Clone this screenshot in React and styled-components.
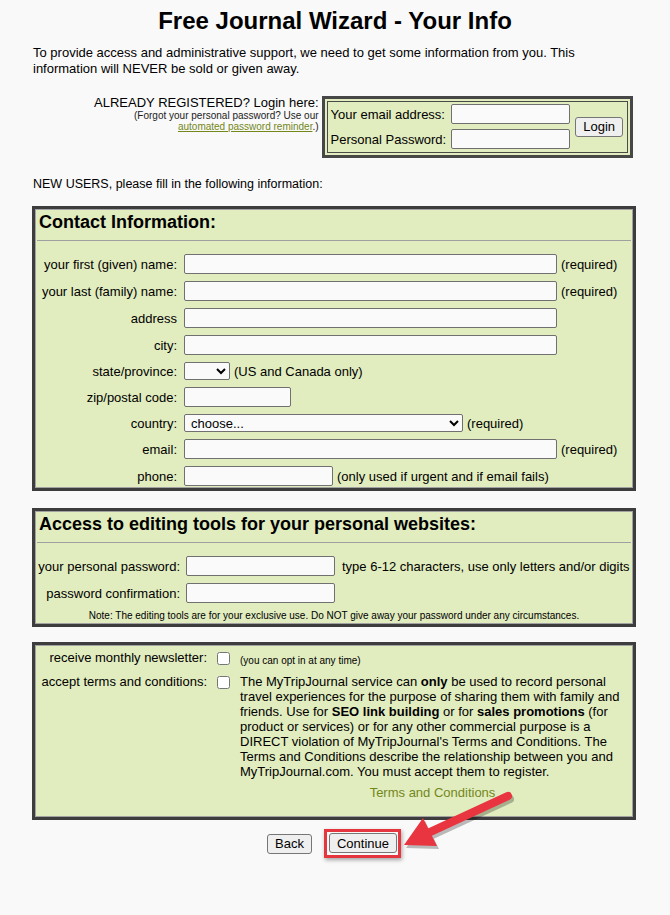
import React from 'react';
import styled, { createGlobalStyle } from 'styled-components';

const GlobalStyle = createGlobalStyle`
  body {
    margin: 0;
    background: #f9f9f9;
    font-family: "Liberation Sans", Arial, sans-serif;
    color: #000;
  }
`;

const Page = styled.div`
  position: relative;
  width: 670px;
  min-height: 915px;
  padding-top: 7px;
  box-sizing: border-box;
`;

const Title = styled.h1`
  margin: 0;
  font-size: 24px;
  line-height: 28px;
  font-weight: bold;
  text-align: center;
`;

const Content = styled.div`
  width: 604px;
  margin-left: 32px;
`;

const Intro = styled.p`
  margin: 10px 0 0 1px;
  font-size: 13px;
  line-height: 16px;
`;

const LoginRow = styled.div`
  display: flex;
  justify-content: flex-end;
  align-items: flex-start;
  margin: 19px 3px 0 0;
`;

const LoginHint = styled.div`
  display: flex;
  flex-direction: column;
  align-items: flex-end;
  text-align: right;
  margin: -1px 3px 0 0;
  font-size: 13px;
  line-height: 15px;
`;

const SmallText = styled.span`
  font-size: 10px;
  line-height: 11px;
  color: #222;
  &:first-of-type {
    margin-top: 1px;
  }
`;

const Link = styled.a`
  color: #74871a;
  text-decoration: ${p => (p.$plain ? 'none' : 'underline')};
  cursor: pointer;
`;

const LoginBox = styled.div`
  border: 3px solid #474747;
  padding: 2px;
  background: #e1ecbf;
`;

const LoginInner = styled.div`
  border: 1px solid #4a4a4a;
  padding: 2px 4px 3px 3px;
  display: grid;
  grid-template-columns: auto 119px auto;
  column-gap: 5px;
  row-gap: 5px;
  align-items: center;
  font-size: 13px;
`;

const LoginButtonCell = styled.div`
  grid-column: 3;
  grid-row: 1 / span 2;
  display: flex;
  align-items: center;
`;

const TextInput = styled.input`
  box-sizing: border-box;
  width: ${p => p.$w}px;
  height: 20px;
  margin: 0;
  padding: 1px 3px;
  border: 1px solid #707070;
  border-radius: 2px;
  background: #fafafa;
  font-family: inherit;
  font-size: 13px;
`;

const Select = styled.select`
  box-sizing: border-box;
  width: ${p => p.$w}px;
  height: 18px;
  margin: 0;
  padding: 0 2px;
  border: 1px solid #707070;
  border-radius: 2px;
  background: #fafafa;
  font-family: inherit;
  font-size: 13px;
  color: #000;
`;

const Button = styled.button`
  height: 20px;
  margin: 0;
  padding: 0 ${p => p.$px || 7}px;
  border: 1px solid #767676;
  border-radius: 3px;
  background: #efefef;
  font-family: inherit;
  font-size: 13px;
  color: #000;
`;

const NewUsers = styled.div`
  margin: 19px 0 0 1px;
  font-size: 12.5px;
  line-height: 15px;
`;

const Panel = styled.section`
  margin-top: ${p => p.$gap}px;
  border: 3px solid #3d3d3d;
  box-shadow: inset 0 0 0 1px #a2a2a2;
  background: #e1ecbf;
  padding: ${p => p.$pad};
`;

const PanelTitle = styled.h2`
  margin: 0;
  padding: 2px 4px 0;
  font-size: 18px;
  line-height: 22px;
  font-weight: bold;
`;

const Rule = styled.div`
  margin: 7px 2px 0;
  border-top: 1px solid #a0a0a0;
`;

const FormGrid = styled.div`
  display: grid;
  grid-template-columns: ${p => p.$label}px 1fr;
  column-gap: ${p => p.$colGap}px;
  row-gap: 7px;
  align-items: center;
  margin-top: 13px;
  padding: 0 3px;
  font-size: 13px;
  line-height: 15px;
`;

const Label = styled.label`
  text-align: right;
  white-space: nowrap;
`;

const Field = styled.div`
  display: flex;
  align-items: center;
  gap: ${p => p.$gap || 4}px;
  white-space: nowrap;
`;

const Note = styled.div`
  margin-top: 7px;
  padding-bottom: 1px;
  font-size: 10px;
  line-height: 12px;
  text-align: center;
`;

const TermsGrid = styled.div`
  display: grid;
  grid-template-columns: 169px 13px 1fr;
  column-gap: 10px;
  row-gap: 9px;
  align-items: start;
  font-size: 13px;
  line-height: 15px;
`;

const CheckBox = styled.input`
  width: 13px;
  height: 13px;
  margin: 2px 0 0;
`;

const OptNote = styled.span`
  align-self: end;
  font-size: 10px;
  line-height: 12px;
  margin-bottom: -2px;
`;

const TermsText = styled.div`
  max-width: 385px;
`;

const TermsLink = styled.div`
  margin-top: 6px;
  text-align: center;
`;

const ButtonRow = styled.div`
  display: flex;
  justify-content: center;
  align-items: center;
  gap: 12px;
  margin-top: 9px;
`;

const Highlight = styled.span`
  display: inline-flex;
  padding: 1px 1px 2px 2px;
  border: 3px solid #e5353f;
  box-shadow: 1px 2px 4px rgba(0, 0, 0, 0.35);
`;

const Overlay = styled.svg`
  position: absolute;
  top: 0;
  left: 0;
  pointer-events: none;
`;

function Arrow() {
  return (
    <Overlay width="670" height="915" viewBox="0 0 670 915">
      <g opacity="0.25" transform="translate(2 3)">
        <line x1="508" y1="796" x2="428" y2="833" stroke="#000" strokeWidth="8" strokeLinecap="round" />
        <polygon points="404,845 423,818 437,846" fill="#000" />
      </g>
      <line x1="508" y1="796" x2="428" y2="833" stroke="#e8353f" strokeWidth="8" strokeLinecap="round" />
      <polygon points="404,845 423,818 437,846" fill="#e8353f" />
    </Overlay>
  );
}

const contactRows = [
  { label: 'your first (given) name:', w: 373, note: '(required)' },
  { label: 'your last (family) name:', w: 373, note: '(required)' },
  { label: 'address', w: 373 },
  { label: 'city:', w: 373 },
];

function App() {
  return (
    <Page>
      <GlobalStyle />
      <Title>Free Journal Wizard - Your Info</Title>
      <Content>
        <Intro>
          To provide access and administrative support, we need to get some information from you. This
          information will NEVER be sold or given away.
        </Intro>

        <LoginRow>
          <LoginHint>
            <span>ALREADY REGISTERED? Login here:</span>
            <SmallText>(Forgot your personal password? Use our</SmallText>
            <SmallText>
              <Link>automated password reminder</Link>.)
            </SmallText>
          </LoginHint>
          <LoginBox>
            <LoginInner>
              <span>Your email address:</span>
              <TextInput $w={119} />
              <LoginButtonCell>
                <Button>Login</Button>
              </LoginButtonCell>
              <span>Personal Password:</span>
              <TextInput $w={119} type="password" />
            </LoginInner>
          </LoginBox>
        </LoginRow>

        <NewUsers>NEW USERS, please fill in the following information:</NewUsers>

        <Panel $gap={14} $pad="0 0 2px">
          <PanelTitle>Contact Information:</PanelTitle>
          <Rule />
          <FormGrid $label={139} $colGap={7}>
            {contactRows.map(r => (
              <React.Fragment key={r.label}>
                <Label>{r.label}</Label>
                <Field>
                  <TextInput $w={r.w} />
                  {r.note && <span>{r.note}</span>}
                </Field>
              </React.Fragment>
            ))}
            <Label>state/province:</Label>
            <Field>
              <Select $w={46}>
                <option></option>
              </Select>
              <span>(US and Canada only)</span>
            </Field>
            <Label>zip/postal code:</Label>
            <Field>
              <TextInput $w={107} />
            </Field>
            <Label>country:</Label>
            <Field>
              <Select $w={279}>
                <option>choose...</option>
              </Select>
              <span>(required)</span>
            </Field>
            <Label>email:</Label>
            <Field>
              <TextInput $w={373} />
              <span>(required)</span>
            </Field>
            <Label>phone:</Label>
            <Field>
              <TextInput $w={149} />
              <span>(only used if urgent and if email fails)</span>
            </Field>
          </FormGrid>
        </Panel>

        <Panel $gap={17} $pad="0 0 1px">
          <PanelTitle>Access to editing tools for your personal websites:</PanelTitle>
          <Rule />
          <FormGrid $label={142} $colGap={6}>
            <Label>your personal password:</Label>
            <Field $gap={7}>
              <TextInput $w={149} type="password" />
              <span>type 6-12 characters, use only letters and/or digits</span>
            </Field>
            <Label>password confirmation:</Label>
            <Field>
              <TextInput $w={149} type="password" />
            </Field>
          </FormGrid>
          <Note>
            Note: The editing tools are for your exclusive use. Do NOT give away your password under any circumstances.
          </Note>
        </Panel>

        <Panel $gap={15} $pad="5px 3px 17px">
          <TermsGrid>
            <Label>receive monthly newsletter:</Label>
            <CheckBox type="checkbox" />
            <OptNote>(you can opt in at any time)</OptNote>
            <Label>accept terms and conditions:</Label>
            <CheckBox type="checkbox" />
            <TermsText>
              The MyTripJournal service can <b>only</b> be used to record personal travel experiences for the
              purpose of sharing them with family and friends. Use for <b>SEO link building</b> or for{' '}
              <b>sales promotions</b> (for product or services) or for any other commercial purpose is a DIRECT
              violation of MyTripJournal's Terms and Conditions. The Terms and Conditions describe the
              relationship between you and MyTripJournal.com. You must accept them to register.
              <TermsLink>
                <Link $plain>Terms and Conditions</Link>
              </TermsLink>
            </TermsText>
          </TermsGrid>
        </Panel>

        <ButtonRow>
          <Button>Back</Button>
          <Highlight>
            <Button>Continue</Button>
          </Highlight>
        </ButtonRow>
      </Content>
      <Arrow />
    </Page>
  );
}

export default App;
